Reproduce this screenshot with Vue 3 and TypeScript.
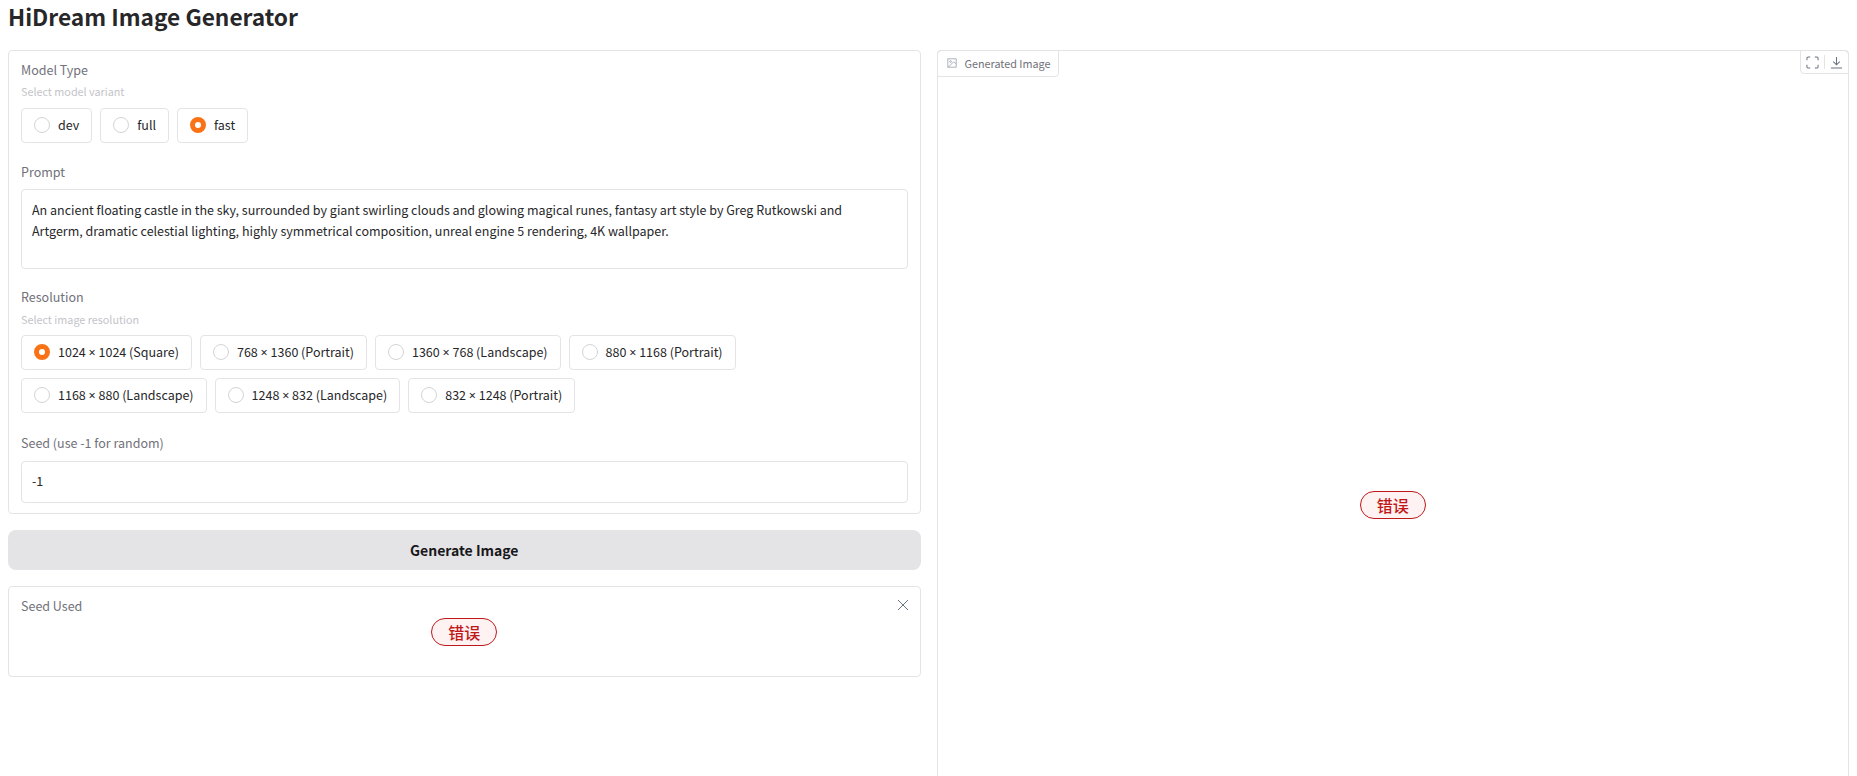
<script setup lang="ts">
const models = [
  { label: 'dev', on: false },
  { label: 'full', on: false },
  { label: 'fast', on: true },
]
const resolutions = [
  { w: '1024', h: '1024 (Square)', on: true },
  { w: '768', h: '1360 (Portrait)', on: false },
  { w: '1360', h: '768 (Landscape)', on: false },
  { w: '880', h: '1168 (Portrait)', on: false },
  { w: '1168', h: '880 (Landscape)', on: false },
  { w: '1248', h: '832 (Landscape)', on: false },
  { w: '832', h: '1248 (Portrait)', on: false },
]
const prompt = 'An ancient floating castle in the sky, surrounded by giant swirling clouds and glowing magical runes, fantasy art style by Greg Rutkowski and Artgerm, dramatic celestial lighting, highly symmetrical composition, unreal engine 5 rendering, 4K wallpaper.'
</script>

<template>
  <div class="page">
    <h1 class="title">HiDream Image Generator</h1>
    <div class="columns">
      <div class="left">
        <div class="box form">
          <div class="label">Model Type</div>
          <div class="info">Select model variant</div>
          <div class="options">
            <label v-for="m in models" :key="m.label" class="option">
              <span class="radio" :class="{ on: m.on }"></span>
              <span>{{ m.label }}</span>
            </label>
          </div>
          <div class="label prompt-label">Prompt</div>
          <div class="field area">{{ prompt }}</div>
          <div class="label res-label">Resolution</div>
          <div class="info res-info">Select image resolution</div>
          <div class="options res-options">
            <label v-for="r in resolutions" :key="r.w" class="option">
              <span class="radio" :class="{ on: r.on }"></span>
              <span>{{ r.w }} <span class="times">×</span> {{ r.h }}</span>
            </label>
          </div>
          <div class="label seed-label">Seed (use -1 for random)</div>
          <div class="field seed">-1</div>
        </div>
        <button class="generate" type="button">Generate Image</button>
        <div class="box used">
          <div class="label">Seed Used</div>
          <svg class="close" viewBox="0 0 12 12" width="12" height="12" fill="none" stroke="#6b7280" stroke-width="1">
            <path d="M1 1 L11 11 M11 1 L1 11" />
          </svg>
          <span class="error">错误</span>
        </div>
      </div>
      <div class="box panel">
        <div class="tab">
          <svg viewBox="0 0 24 24" width="10" height="10" fill="none" stroke="#9ca3af" stroke-width="2">
            <rect x="2" y="2" width="20" height="20" />
            <circle cx="8.5" cy="8.5" r="2" />
            <path d="M22 15 L16 9 L3 22" />
          </svg>
          <span>Generated Image</span>
        </div>
        <div class="tools">
          <span class="tool">
            <svg viewBox="0 0 14 14" width="13" height="13" fill="none" stroke="#6b7280" stroke-width="1.1">
              <path d="M1 4.5 V2.5 A1.5 1.5 0 0 1 2.5 1 H4.5 M9.5 1 H11.5 A1.5 1.5 0 0 1 13 2.5 V4.5 M13 9.5 V11.5 A1.5 1.5 0 0 1 11.5 13 H9.5 M4.5 13 H2.5 A1.5 1.5 0 0 1 1 11.5 V9.5" />
            </svg>
          </span>
          <span class="tool sep">
            <svg viewBox="0 0 14 14" width="13" height="13" fill="none" stroke="#6b7280" stroke-width="1.1">
              <path d="M7 1 V9.5 M3.5 6 L7 9.5 L10.5 6 M1 13 H13" />
            </svg>
          </span>
        </div>
        <span class="error">错误</span>
      </div>
    </div>
  </div>
</template>

<style scoped>
.page {
  padding: 0 8px;
  font-family: "Noto Sans CJK SC", "Noto Sans", sans-serif;
  color: #27272a;
  font-size: 12.5px;
  line-height: 20px;
}
.title {
  margin: 0;
  height: 50px;
  padding: 2px 0 0;
  box-sizing: border-box;
  font-size: 22.7px;
  line-height: 30px;
  font-weight: 600;
}
.columns {
  display: grid;
  grid-template-columns: 1fr 1fr;
  gap: 16px;
  align-items: start;
}
.left {
  display: flex;
  flex-direction: column;
  gap: 16px;
}
.box {
  box-sizing: border-box;
  border: 1px solid #e4e4e7;
  border-radius: 4px;
  background: #fff;
}
.form {
  padding: 9px 12px 10px;
  height: 464px;
}
.label {
  color: #71717a;
  font-size: 12.5px;
  line-height: 20px;
}
.info {
  color: #c4c4c9;
  font-size: 10.8px;
  line-height: 16px;
  margin-top: 3px;
}
.options {
  display: flex;
  flex-wrap: wrap;
  gap: 8px;
  margin-top: 9px;
}
.res-info {
  margin-top: 4px;
}
.res-options {
  margin-top: 8px;
}
.option {
  display: flex;
  align-items: center;
  gap: 8px;
  height: 35px;
  box-sizing: border-box;
  padding: 0 12px 1px;
  border: 1px solid #e4e4e7;
  border-radius: 4px;
  color: #27272a;
}
.times {
  font-family: "Noto Sans", sans-serif;
}
.radio {
  width: 16px;
  height: 16px;
  box-sizing: border-box;
  border: 1px solid #d4d4d8;
  border-radius: 50%;
  background: #fff;
}
.radio.on {
  border: 5px solid #f97316;
}
.prompt-label {
  margin-top: 19px;
}
.field {
  box-sizing: border-box;
  margin-top: 7px;
  padding: 9px 10px;
  border: 1px solid #e4e4e7;
  border-radius: 4px;
  color: #27272a;
}
.area {
  height: 80px;
  padding-right: 40px;
  line-height: 21px;
}
.res-label {
  margin-top: 18px;
}
.seed-label {
  margin-top: 20px;
}
.seed {
  margin-top: 8px;
  height: 42px;
}
.generate {
  height: 40px;
  border: 0;
  border-radius: 8px;
  background: #e4e4e7;
  color: #18181b;
  font: 600 14px/20px "Noto Sans CJK SC", "Noto Sans", sans-serif;
}
.used {
  position: relative;
  height: 91px;
  padding: 9px 12px;
  display: flex;
  flex-direction: column;
}
.used .error {
  position: absolute;
  left: 50%;
  top: 50%;
  transform: translate(-50%, -50%);
}
.close {
  position: absolute;
  right: 11px;
  top: 12px;
}
.error {
  display: inline-flex;
  align-items: center;
  justify-content: center;
  box-sizing: border-box;
  width: 66px;
  height: 28px;
  border: 1px solid #c01818;
  border-radius: 14px;
  background: #fef2f2;
  color: #c01818;
  font-size: 16px;
  font-weight: 500;
}
.panel {
  position: relative;
  height: 910px;
  display: flex;
  align-items: center;
  justify-content: center;
}
.tab {
  position: absolute;
  left: -1px;
  top: -1px;
  display: flex;
  align-items: center;
  gap: 8px;
  box-sizing: border-box;
  height: 27px;
  padding: 0 8px 2px 9px;
  border: 1px solid #e4e4e7;
  border-radius: 4px 0 4px 0;
  color: #71717a;
  font-size: 10.8px;
}
.tools {
  position: absolute;
  right: -1px;
  top: -1px;
  display: flex;
  align-items: center;
  box-sizing: border-box;
  height: 24px;
  border: 1px solid #e4e4e7;
  border-radius: 0 4px 0 4px;
}
.tool {
  display: flex;
  align-items: center;
  justify-content: center;
  width: 23px;
  height: 14px;
}
.sep {
  border-left: 1px solid #e4e4e7;
}
</style>

<style>
html, body {
  overflow: hidden;
  background: #fff;
}
</style>
